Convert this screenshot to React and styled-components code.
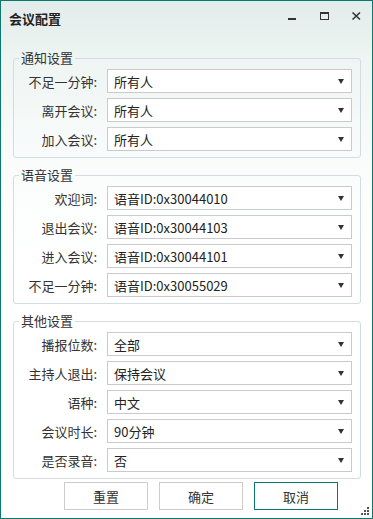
import React from "react";
import styled, { createGlobalStyle } from "styled-components";

const GlobalStyle = createGlobalStyle`
  html, body {
    margin: 0;
    padding: 0;
  }
  body {
    font-family: "Noto Sans CJK SC", "Noto Sans", sans-serif;
    font-size: 13px;
    color: #333;
  }
`;

const groups = [
  {
    title: "通知设置",
    rows: [
      ["不足一分钟:", "所有人"],
      ["离开会议:", "所有人"],
      ["加入会议:", "所有人"],
    ],
  },
  {
    title: "语音设置",
    rows: [
      ["欢迎词:", "语音ID:0x30044010"],
      ["退出会议:", "语音ID:0x30044103"],
      ["进入会议:", "语音ID:0x30044101"],
      ["不足一分钟:", "语音ID:0x30055029"],
    ],
  },
  {
    title: "其他设置",
    rows: [
      ["播报位数:", "全部"],
      ["主持人退出:", "保持会议"],
      ["语种:", "中文"],
      ["会议时长:", "90分钟"],
      ["是否录音:", "否"],
    ],
  },
];

const App = () => {
  return (
    <>
      <GlobalStyle />
      <Window>
        <TitleBar>
          <Title>会议配置</Title>
          <Controls>
            <CtrlButton>
              <svg width="11" height="11" viewBox="0 0 11 11">
                <rect x="1" y="7" width="8" height="2" fill="#333" />
              </svg>
            </CtrlButton>
            <CtrlButton>
              <svg width="11" height="11" viewBox="0 0 11 11">
                <rect x="1.5" y="1.5" width="8" height="7" fill="none" stroke="#333" strokeWidth="1" />
                <rect x="1" y="1" width="9" height="2" fill="#333" />
              </svg>
            </CtrlButton>
            <CtrlButton>
              <svg width="11" height="11" viewBox="0 0 11 11">
                <path d="M1.5 1.5 L9 8.5 M9 1.5 L1.5 8.5" stroke="#333" strokeWidth="1.6" />
              </svg>
            </CtrlButton>
          </Controls>
        </TitleBar>
        <Content>
          {groups.map((g, gi) => (
            <Group key={g.title} $first={gi === 0}>
              <Legend>{g.title}</Legend>
              {g.rows.map(([label, value]) => (
                <Row key={label}>
                  <Label>{label}</Label>
                  <Select>
                    <SelectText>{value}</SelectText>
                    <Arrow />
                  </Select>
                </Row>
              ))}
            </Group>
          ))}
          <ButtonRow>
            <Button>重置</Button>
            <Button>确定</Button>
            <Button $primary>取消</Button>
          </ButtonRow>
        </Content>
        <Grip>
          <svg width="9" height="9" viewBox="0 0 9 9">
            <rect x="6" y="0" width="2" height="2" fill="#555" />
            <rect x="3" y="3" width="2" height="2" fill="#555" />
            <rect x="6" y="3" width="2" height="2" fill="#555" />
            <rect x="0" y="6" width="2" height="2" fill="#555" />
            <rect x="3" y="6" width="2" height="2" fill="#555" />
            <rect x="6" y="6" width="2" height="2" fill="#555" />
          </svg>
        </Grip>
      </Window>
    </>
  );
};

const Window = styled.div`
  position: relative;
  width: 373px;
  height: 519px;
  box-sizing: border-box;
  border: 1px solid #0b7a6c;
  background: linear-gradient(#e2ecea 0px, #eef5f3 60px, #fafcfc 160px, #ffffff 260px);
  display: flex;
  flex-direction: column;
  overflow: hidden;
`;

const TitleBar = styled.div`
  height: 36px;
  display: flex;
  align-items: center;
  justify-content: space-between;
  padding-left: 8px;
  flex-shrink: 0;
`;

const Title = styled.div`
  font-size: 13px;
  font-weight: bold;
  color: #222;
  margin-top: -1px;
`;

const Controls = styled.div`
  display: flex;
  align-items: center;
  margin-top: -6px;
`;

const CtrlButton = styled.div`
  width: 32px;
  height: 20px;
  display: flex;
  align-items: center;
  justify-content: center;
`;

const Content = styled.div`
  padding: 13px 11px 0 12px;
  display: flex;
  flex-direction: column;
`;

const Group = styled.fieldset`
  margin: ${(p) => (p.$first ? "0" : "9px")} 0 0 0;
  padding: 3px 8px 6px 0;
  border: 1px solid #d3dcdf;
  border-radius: 3px;
  min-width: 0;
  display: flex;
  flex-direction: column;
  gap: 5px;
`;

const Legend = styled.legend`
  margin-left: 5px;
  padding: 0 2px;
  font-size: 13px;
  line-height: 16px;
  color: #333;
`;

const Row = styled.div`
  display: grid;
  grid-template-columns: 83px 1fr;
  column-gap: 10px;
  align-items: center;
`;

const Label = styled.div`
  text-align: right;
  white-space: nowrap;
  font-size: 13px;
  color: #333;
`;

const Select = styled.div`
  height: 24px;
  box-sizing: border-box;
  border: 1px solid #cacaca;
  background: #fff;
  display: flex;
  align-items: center;
  justify-content: space-between;
  padding: 0 7px 0 6px;
`;

const SelectText = styled.span`
  font-size: 13px;
  color: #222;
  padding-top: 1px;
`;

const Arrow = styled.span`
  width: 0;
  height: 0;
  border-left: 3.5px solid transparent;
  border-right: 3.5px solid transparent;
  border-top: 5px solid #333;
  margin-top: 1px;
`;

const ButtonRow = styled.div`
  display: flex;
  gap: 11px;
  padding-left: 51px;
  margin-top: 3px;
`;

const Button = styled.div`
  width: 84px;
  height: 28px;
  box-sizing: border-box;
  border: 1px solid ${(p) => (p.$primary ? "#0b7a6c" : "#cccccc")};
  background: #fff;
  display: flex;
  align-items: center;
  justify-content: center;
  font-size: 13px;
  color: #333;
`;

const Grip = styled.div`
  position: absolute;
  right: 2px;
  bottom: 2px;
  display: flex;
`;

export default App;
